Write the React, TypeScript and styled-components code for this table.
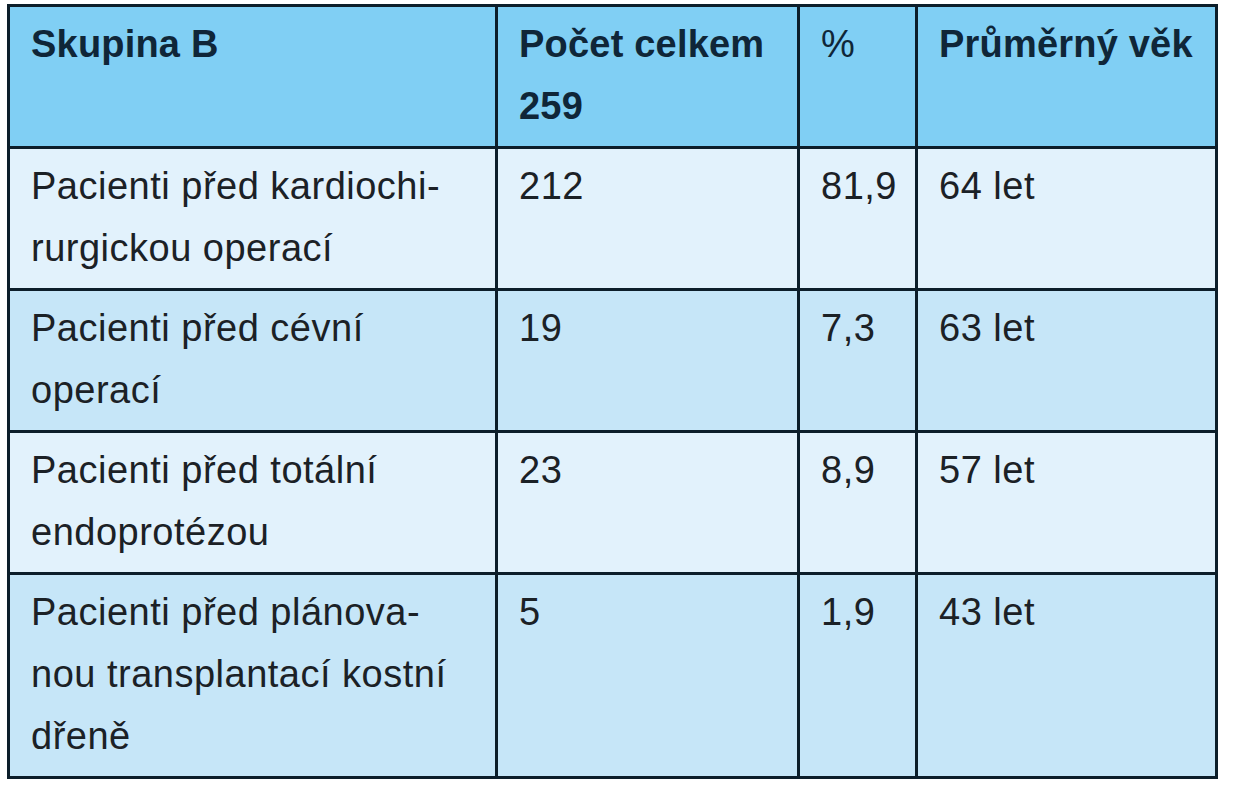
import React from 'react';
import styled, { createGlobalStyle } from 'styled-components';

const GlobalStyle = createGlobalStyle`
  html, body {
    margin: 0;
    padding: 0;
    background: #ffffff;
  }
  body {
    font-family: 'Liberation Sans', Arial, sans-serif;
  }
`;

const Page = styled.div`
  padding: 4px 0 0 7px;
`;

const Table = styled.table`
  border-collapse: collapse;
  table-layout: fixed;
  width: 1208px;
  border: 3px solid #0c1e2a;
`;

const Col = styled.col<{ $w: number }>`
  width: ${p => p.$w}px;
`;

const HeadRow = styled.tr`
  background: #80cff4;
`;

const BodyRow = styled.tr<{ $shade: boolean }>`
  background: ${p => (p.$shade ? '#c6e6f8' : '#e2f2fc')};
`;

const HeadCell = styled.th<{ $light?: boolean }>`
  border: 3px solid #0c1e2a;
  padding: 6px 18px 9px 21px;
  text-align: left;
  vertical-align: top;
  font-size: 38px;
  line-height: 62px;
  font-weight: ${p => (p.$light ? 400 : 700)};
  color: #0f2638;
  letter-spacing: 0.2px;
`;

const Cell = styled.td`
  border: 3px solid #0c1e2a;
  padding: 6px 18px 9px 21px;
  vertical-align: top;
  font-size: 38px;
  line-height: 62px;
  font-weight: 400;
  color: #1b2126;
  letter-spacing: 0.5px;
  white-space: nowrap;
`;

type Row = { label: string[]; count: string; pct: string; age: string };

const rows: Row[] = [
  { label: ['Pacienti před kardiochi-', 'rurgickou operací'], count: '212', pct: '81,9', age: '64 let' },
  { label: ['Pacienti před cévní', 'operací'], count: '19', pct: '7,3', age: '63 let' },
  { label: ['Pacienti před totální', 'endoprotézou'], count: '23', pct: '8,9', age: '57 let' },
  {
    label: ['Pacienti před plánova-', 'nou transplantací kostní', 'dřeně'],
    count: '5',
    pct: '1,9',
    age: '43 let',
  },
];

function Lines({ lines }: { lines: string[] }) {
  return (
    <>
      {lines.map((l, i) => (
        <React.Fragment key={i}>
          {i > 0 && <br />}
          {l}
        </React.Fragment>
      ))}
    </>
  );
}

export default function App() {
  return (
    <Page>
      <GlobalStyle />
      <Table>
        <colgroup>
          <Col $w={488} />
          <Col $w={302} />
          <Col $w={118} />
          <Col $w={300} />
        </colgroup>
        <thead>
          <HeadRow>
            <HeadCell>Skupina B</HeadCell>
            <HeadCell>
              <Lines lines={['Počet celkem', '259']} />
            </HeadCell>
            <HeadCell $light>%</HeadCell>
            <HeadCell>Průměrný věk</HeadCell>
          </HeadRow>
        </thead>
        <tbody>
          {rows.map((r, i) => (
            <BodyRow key={i} $shade={i % 2 === 1}>
              <Cell>
                <Lines lines={r.label} />
              </Cell>
              <Cell>{r.count}</Cell>
              <Cell>{r.pct}</Cell>
              <Cell>{r.age}</Cell>
            </BodyRow>
          ))}
        </tbody>
      </Table>
    </Page>
  );
}
